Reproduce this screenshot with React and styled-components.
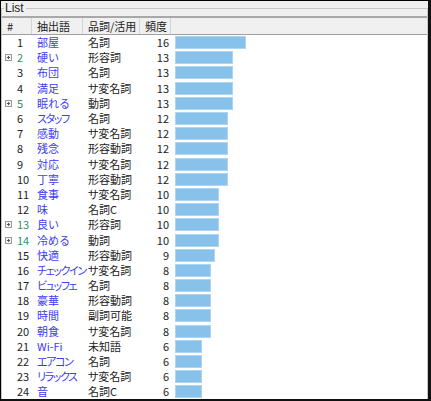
import React from 'react'
import styled, { createGlobalStyle } from 'styled-components'

const GlobalStyle = createGlobalStyle`
  html, body {
    margin: 0;
    padding: 0;
    background: #ffffff;
  }
  body {
    font-family: "Noto Sans CJK JP", "Noto Sans", sans-serif;
  }
`

const rows = [
  [1, '部屋', '名詞', 16, false],
  [2, '硬い', '形容詞', 13, true],
  [3, '布団', '名詞', 13, false],
  [4, '満足', 'サ変名詞', 13, false],
  [5, '眠れる', '動詞', 13, true],
  [6, 'スタッフ', '名詞', 12, false],
  [7, '感動', 'サ変名詞', 12, false],
  [8, '残念', '形容動詞', 12, false],
  [9, '対応', 'サ変名詞', 12, false],
  [10, '丁寧', '形容動詞', 12, false],
  [11, '食事', 'サ変名詞', 10, false],
  [12, '味', '名詞C', 10, false],
  [13, '良い', '形容詞', 10, true],
  [14, '冷める', '動詞', 10, true],
  [15, '快適', '形容動詞', 9, false],
  [16, 'チェックイン', 'サ変名詞', 8, false],
  [17, 'ビュッフェ', '名詞', 8, false],
  [18, '豪華', '形容動詞', 8, false],
  [19, '時間', '副詞可能', 8, false],
  [20, '朝食', 'サ変名詞', 8, false],
  [21, 'Wi-Fi', '未知語', 6, false],
  [22, 'エアコン', '名詞', 6, false],
  [23, 'リラックス', 'サ変名詞', 6, false],
  [24, '音', '名詞C', 6, false],
]

const isKana = s => /[\u30a0-\u30ff]/.test(s)

const Frame = styled.div`
  box-sizing: border-box;
  width: 431px;
  height: 401px;
  overflow: hidden;
  background: #f0f0f0;
  border-top: 1px solid #000;
  border-left: 1px solid #000;
  border-right: 3px solid #111;
  border-bottom: 2px solid #111;
  display: flex;
  flex-direction: column;
`

const Group = styled.fieldset`
  margin: 0;
  padding: 0;
  min-width: 0;
  flex: 1;
  border: 1px solid #c8c8c8;
  border-bottom: none;
  display: flex;
  flex-direction: column;
`

const Legend = styled.legend`
  padding: 0 2px 0 1px;
  margin-left: 2px;
  font-family: "Liberation Sans", "Noto Sans", sans-serif;
  font-size: 12px;
  line-height: 14px;
  color: #222;
`

const ListView = styled.div`
  margin-top: 1px;
  flex: 1;
  background: #fff;
  border-top: 2px solid #a8a8a8;
  overflow: hidden;
  font-size: 11px;
  color: #222;
`

const Grid = styled.div`
  display: grid;
  grid-template-columns: 30px 51px 57px 31px 1fr;
`

const HeaderRow = styled(Grid)`
  height: 16px;
  background: #f0f0f0;
  border-bottom: 1px solid #a0a0a0;
`

const HeadCell = styled.div`
  display: flex;
  align-items: center;
  padding-left: 5px;
  border-right: ${p => (p.$last ? 'none' : '1px solid #d4d4d4')};
  white-space: nowrap;
  overflow: hidden;
`

const Row = styled(Grid)`
  height: 15.2px;
  align-items: center;
  line-height: 15px;
`

const NumCell = styled.div`
  position: relative;
  padding-left: 15px;
  color: ${p => (p.$expand ? '#2f9068' : '#222')};
`

const Expander = styled.svg`
  position: absolute;
  left: 3px;
  top: 4px;
`

const WordCell = styled.div`
  padding-left: 5px;
  color: #3c3cf0;
  white-space: nowrap;
  font-feature-settings: ${p => (p.$kana ? '"palt"' : 'normal')};
  letter-spacing: ${p => (p.$kana ? '-1.4px' : '0')};
`

const PosCell = styled.div`
  padding-left: 5px;
  white-space: nowrap;
  font-feature-settings: "palt";
`

const FreqCell = styled.div`
  text-align: right;
  padding-right: 2px;
`

const BarCell = styled.div`
  padding-left: 4px;
  height: 15.2px;
  display: flex;
  align-items: center;
`

const Bar = styled.div`
  box-sizing: border-box;
  height: 13px;
  background: #88c1ea;
  border: 1px solid #acd5f4;
`

const App = () => {
  return (
    <>
      <GlobalStyle />
      <Frame>
        <Group>
          <Legend>List</Legend>
          <ListView>
            <HeaderRow>
              <HeadCell>#</HeadCell>
              <HeadCell>抽出語</HeadCell>
              <HeadCell>品詞/活用</HeadCell>
              <HeadCell>頻度</HeadCell>
              <HeadCell $last />
            </HeaderRow>
            {rows.map(([n, word, pos, freq, expand]) => (
              <Row key={n}>
                <NumCell $expand={expand}>
                  {expand && (
                    <Expander width="7" height="7" viewBox="0 0 7 7">
                      <rect x="0.5" y="0.5" width="6" height="6" fill="#f4f4f4" stroke="#9a9a9a" />
                      <path d="M2 3.5h3M3.5 2v3" stroke="#555" strokeWidth="1" />
                    </Expander>
                  )}
                  {n}
                </NumCell>
                <WordCell $kana={isKana(word)}>{word}</WordCell>
                <PosCell>{pos}</PosCell>
                <FreqCell>{freq}</FreqCell>
                <BarCell>
                  <Bar style={{ width: `${freq * 4.44}px` }} />
                </BarCell>
              </Row>
            ))}
          </ListView>
        </Group>
      </Frame>
    </>
  )
}

export default App
